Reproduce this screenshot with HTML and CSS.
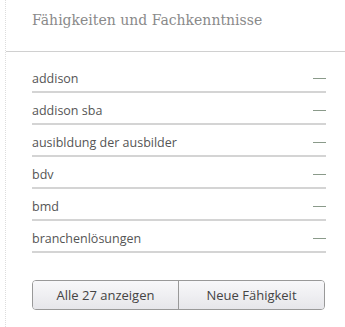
FILE: index.html
```html
<!DOCTYPE html>
<html lang="de">
<head>
    <meta charset="UTF-8">
    <title>Fähigkeiten</title>
    <link rel="stylesheet" href="styles.css">
</head>
<body>
    <div class="panel">
        <h2 class="panel-title">Fähigkeiten und Fachkenntnisse</h2>

        <ul class="skills">
            <li><span>addison</span><span class="dash"></span></li>
            <li><span>addison sba</span><span class="dash"></span></li>
            <li><span>ausibldung der ausbilder</span><span class="dash"></span></li>
            <li><span>bdv</span><span class="dash"></span></li>
            <li><span>bmd</span><span class="dash"></span></li>
            <li><span>branchenlösungen</span><span class="dash"></span></li>
        </ul>

        <div class="actions">
            <button type="button">Alle 27 anzeigen</button>
            <button type="button">Neue Fähigkeit</button>
        </div>
    </div>
</body>
</html>
```

FILE: styles.css
```css
body {
    margin: 0;
    background: #fff;
    font-family: "Open Sans", "Noto Sans", Arial, sans-serif;
}

.panel {
    margin-left: 5px;
    border-left: 1px dotted #ddd;
    height: 327px;
    box-sizing: border-box;
}

.panel-title {
    margin: 0;
    padding: 12px 0 0 26px;
    height: 39px;
    font-family: "DejaVu Serif", "Liberation Serif", serif;
    font-weight: normal;
    font-size: 14px;
    color: #8a8a8a;
    border-bottom: 1px solid #d0d0d0;
}

.skills {
    list-style: none;
    margin: 0;
    padding: 10px 0 0 26px;
    width: 294px;
}

.skills li {
    display: flex;
    justify-content: space-between;
    align-items: center;
    box-sizing: border-box;
    height: 31px;
    padding-top: 3px;
    margin-bottom: 1px;
    border-bottom: 2px solid #d4d4d4;
    font-size: 12.5px;
    color: #555;
}

.skills .dash {
    width: 13px;
    height: 1px;
    background: #8a9a8a;
}

.actions {
    display: flex;
    box-sizing: border-box;
    margin: 27px 0 0 26px;
    width: 293px;
    height: 30px;
    border: 1px solid #999;
    border-radius: 4px;
    overflow: hidden;
}

.actions button {
    flex: 1;
    border: none;
    background: linear-gradient(#f8f8fa, #e6e6ea);
    font-family: inherit;
    font-size: 13px;
    color: #444;
    cursor: pointer;
}

.actions button + button {
    border-left: 1px solid #999;
}
```
